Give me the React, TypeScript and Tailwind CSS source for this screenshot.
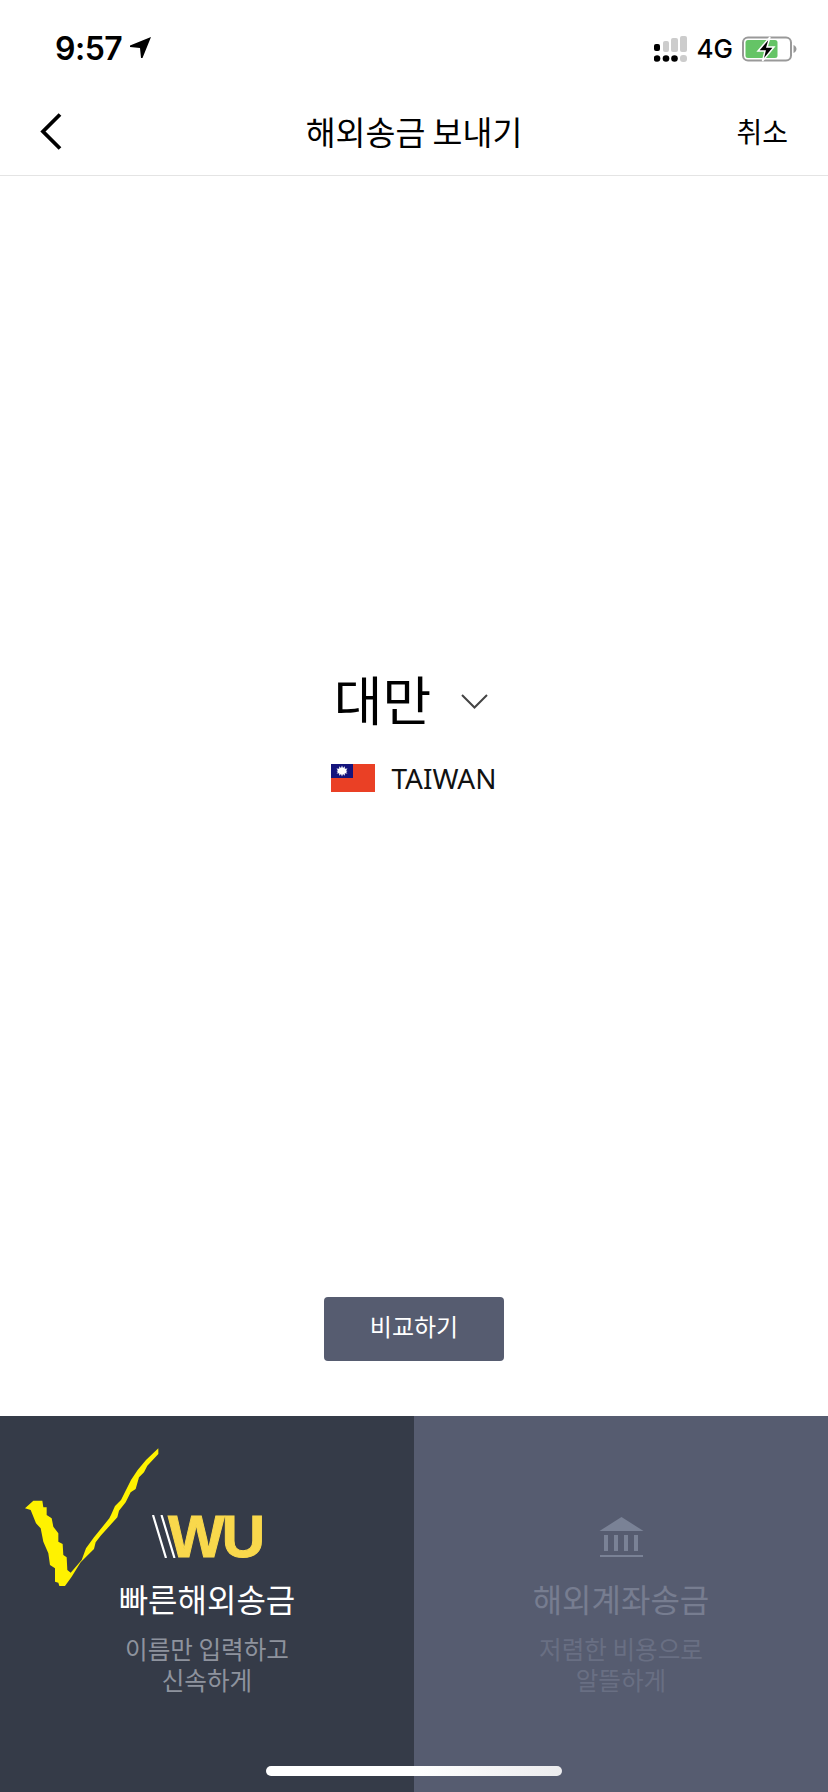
import React from 'react';

const cjk = "font-['Noto_Sans_CJK_KR','Noto_Sans',sans-serif]";

const checkPoints =
  '75,265 100,242 127,242 130,262 140,262 140,285 155,295 160,320 175,340 175,365 188,372 190,405 200,412 202,450 212,458 245,420 258,385 282,352 328,295 333,285 345,258 363,240 378,210 393,180 413,150 438,120 475,85 475,102 442,137 432,157 417,172 407,207 392,217 377,247 357,272 352,292 302,347 287,367 282,387 257,412 242,427 215,470 195,498 178,498 175,488 165,485 165,445 150,435 145,400 130,365 122,325 108,310 92,270';

const StatusBar = () => (
  <div className="flex h-[88px] items-center justify-between pl-[55px] pr-[31px] pt-[10px]">
    <div className="flex items-center gap-[8px]">
      <span className="font-['Inter',sans-serif] text-[32px] font-semibold leading-none tracking-[-0.5px] text-black">9:57</span>
      <svg width="21" height="21" viewBox="0 0 21 21" className="mt-[-3px]">
        <path d="M21 0 L0 8.500 L0 10 L10 11 L11 21 L12.500 21 Z" fill="#000" />
      </svg>
    </div>
    <div className="flex items-center gap-[9px]">
      <svg width="34" height="27" viewBox="0 0 34 27">
        <rect x="0" y="8" width="6" height="7" rx="2" fill="#000" />
        <rect x="9" y="5" width="6" height="11" rx="2" fill="#ccc" />
        <rect x="17" y="2" width="7" height="14" rx="2" fill="#ccc" />
        <rect x="26" y="0" width="7" height="16" rx="2" fill="#ccc" />
        <circle cx="3" cy="22.500" r="3.300" fill="#000" />
        <circle cx="12" cy="22.500" r="3.300" fill="#000" />
        <circle cx="20.500" cy="22.500" r="3.300" fill="#000" />
        <rect x="26" y="19" width="7" height="7" rx="3" fill="#ccc" />
      </svg>
      <span className="font-['Inter',sans-serif] text-[26px] font-medium leading-none text-black">4G</span>
      <svg width="55" height="26" viewBox="0 0 55 26">
        <rect x="1" y="1.500" width="48" height="23" rx="5" fill="#fff" stroke="#999" strokeWidth="2" />
        <rect x="3.500" y="4" width="32" height="18" rx="2.500" fill="#65c466" />
        <path d="M51.500 9 C53.500 10 54.500 11.500 54.500 13 C54.500 14.500 53.500 16 51.500 17 Z" fill="#999" />
        <path d="M28 1 L16 15 L23 15 L20.500 25 L32 11 L25 11 Z" fill="#000" stroke="#fff" strokeWidth="1.500" />
      </svg>
    </div>
  </div>
);

const NavBar = () => (
  <div className="grid h-[88px] grid-cols-[1fr_auto_1fr] items-center border-b border-[#e4e4e4] pb-[1px] pl-[40px] pr-[40px]">
    <svg width="22" height="37" viewBox="0 0 22 37">
      <path d="M20 1.500 L3 18.500 L20 35.500" fill="none" stroke="#000" strokeWidth="3.800" />
    </svg>
    <h1 className={`${cjk} text-[32.500px] font-normal leading-none text-black`}>해외송금 보내기</h1>
    <button className={`${cjk} justify-self-end text-[28px] leading-none text-black`}>취소</button>
  </div>
);

const TaiwanFlag = () => (
  <svg width="44" height="28" viewBox="0 0 44 28">
    <rect width="44" height="28" fill="#ea4025" />
    <rect width="22" height="14" fill="#14147c" />
    <path
      d="M11 1.500 L12 4 L13.800 2.200 L13.800 4.700 L16.500 4.500 L15 6.500 L16.500 7 L15 8 L16.500 9.500 L13.800 9.300 L13.800 11.800 L12 10 L11 12.500 L10 10 L8.200 11.800 L8.200 9.300 L5.500 9.500 L7 8 L5.500 7 L7 6.500 L5.500 4.500 L8.200 4.700 L8.200 2.200 L10 4 Z"
      fill="#fff"
    />
  </svg>
);

const Option = ({
  bg,
  icon,
  title,
  lines,
  titleColor,
  subColor,
}: {
  bg: string;
  icon: React.ReactNode;
  title: string;
  lines: [string, string];
  titleColor: string;
  subColor: string;
}) => (
  <div className={`${bg} flex w-[414px] flex-col items-center pt-[99px]`}>
    <div className="flex h-[43px] items-center justify-center">{icon}</div>
    <div className={`${cjk} ${titleColor} mt-[18px] text-[32px] leading-[44px]`}>{title}</div>
    <p className={`${cjk} ${subColor} mt-[13px] text-center text-[24.600px] leading-[31px]`}>
      {lines[0]}
      <br />
      {lines[1]}
    </p>
  </div>
);

const WuLogo = () => (
  <div className="flex items-center">
    <svg width="24" height="43" viewBox="0 0 24 43">
      <path d="M1 0 L14 43 M9.500 0 L22.500 43" stroke="#fff" strokeWidth="2.200" fill="none" />
    </svg>
    <span className="ml-[-8px] font-['Liberation_Sans',sans-serif] text-[60px] font-bold leading-none tracking-[-3px] text-[#f9d84c] [-webkit-text-stroke:1px_#f9d84c]">
      WU
    </span>
  </div>
);

const BankIcon = () => (
  <svg width="45" height="40" viewBox="0 0 45 40" fill="#7a8296">
    <path d="M22.500 0 L44.500 14 L0.500 14 Z" />
    <rect x="5" y="18" width="4" height="16" />
    <rect x="15" y="18" width="4" height="16" />
    <rect x="25" y="18" width="4" height="16" />
    <rect x="35" y="18" width="4" height="16" />
    <rect x="1" y="38" width="43" height="2" />
  </svg>
);

export default function App() {
  return (
    <div className="relative flex h-[1792px] w-[828px] flex-col overflow-hidden bg-white">
      <StatusBar />
      <NavBar />

      <main className="flex flex-1 flex-col items-center">
        <div className="mt-[484px] flex items-center">
          <span className={`${cjk} ml-[-6px] text-[53px] leading-[76px] text-black`}>대만</span>
          <svg width="27" height="15" viewBox="0 0 27 15" className="ml-[30px] mt-[6px]">
            <path d="M1 1 L13.500 13.500 L26 1" fill="none" stroke="#444" strokeWidth="2" />
          </svg>
        </div>
        <div className="mt-[24px] flex items-center gap-[16px]">
          <TaiwanFlag />
          <span className="font-['Noto_Sans',sans-serif] text-[28px] leading-[36px] text-[#111]">TAIWAN</span>
        </div>
        <button
          className={`${cjk} mt-[501px] h-[64px] w-[180px] rounded-[4px] bg-[#565c70] pb-[6px] text-[24px] leading-none text-white`}
        >
          비교하기
        </button>
      </main>

      <div className="relative flex h-[376px]">
        <Option
          bg="bg-[#353b48]"
          icon={<WuLogo />}
          title="빠른해외송금"
          lines={['이름만 입력하고', '신속하게']}
          titleColor="text-white"
          subColor="text-[#8e939e]"
        />
        <Option
          bg="bg-[#565c70]"
          icon={<BankIcon />}
          title="해외계좌송금"
          lines={['저렴한 비용으로', '알뜰하게']}
          titleColor="text-[#777d90]"
          subColor="text-[#696f83]"
        />
        <svg width="414" height="372" viewBox="0 0 1242 1116" className="absolute left-0 top-[4px]">
          <polygon points={checkPoints} fill="#fff200" />
        </svg>
        <div className="absolute bottom-[16px] left-[266px] h-[10px] w-[296px] rounded-full bg-gradient-to-r from-white from-50% to-[#ececee]" />
      </div>
    </div>
  );
}
